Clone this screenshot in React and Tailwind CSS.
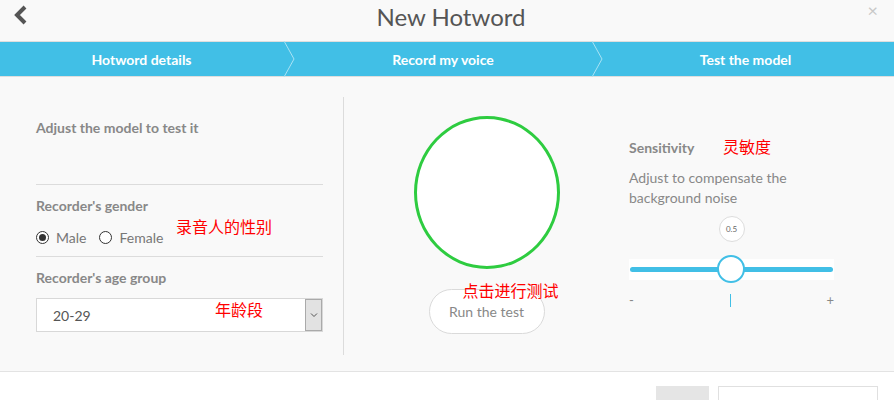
import { useState } from 'react';

const font = { fontFamily: 'Lato, "Noto Sans CJK SC", sans-serif' };

function StepArrow() {
  return (
    <svg width="12" height="36" viewBox="0 0 12 36" className="absolute right-[-6px] top-[-1px]">
      <polyline points="1,0 11,18 1,36" fill="none" stroke="#a9e2f4" strokeWidth="1" />
    </svg>
  );
}

function Step({ label, arrow, className }) {
  return (
    <div className={`relative flex items-center justify-center ${className}`}>
      <span className="text-[14px] font-bold text-white">{label}</span>
      {arrow && <StepArrow />}
    </div>
  );
}

function Radio({ checked, label }) {
  return (
    <label className="flex items-center gap-[7px] text-[14px] text-[#777]">
      <span className="flex h-[13px] w-[13px] items-center justify-center rounded-full border border-[#333] bg-white">
        {checked && <span className="h-[7px] w-[7px] rounded-full bg-[#333]" />}
      </span>
      {label}
    </label>
  );
}

export default function App() {
  const [gender, setGender] = useState('male');

  return (
    <div className="h-[400px] w-[894px] overflow-hidden bg-white" style={font}>
      <header className="relative flex h-[42px] items-center justify-center border-b border-[#dedede] bg-[#f9f9f9]">
        <svg width="16" height="20" viewBox="0 0 16 20" className="absolute left-[13px] top-[5px]">
          <polyline points="12,2 4,10 12,18" fill="none" stroke="#555" strokeWidth="4" />
        </svg>
        <h1 className="relative top-[-4px] ml-[8px] text-[24px] text-[#555]">New Hotword</h1>
        <span className="absolute right-[16px] top-[1px] text-[18px] leading-[18px] text-[#c8c8c8]">×</span>
      </header>

      <nav className="flex h-[35px] border-b border-[#dedede] bg-[#41bfe6]">
        <Step label="Hotword details" arrow className="w-[289px] pr-[6px]" />
        <Step label="Record my voice" arrow className="w-[308px]" />
        <Step label="Test the model" className="flex-1" />
      </nav>

      <main className="flex h-[295px] border-b border-[#e3e3e3] bg-[#f9f9f9] pt-[20px]">
        <section className="ml-[36px] w-[287px] pt-[20px]">
          <p className="text-[14px] font-bold text-[#888]">Adjust the model to test it</p>
          <div className="mt-[46px] border-t border-[#dcdcdc]" />
          <p className="mt-[10px] text-[14px] font-bold text-[#888]">Recorder's gender</p>
          <div className="relative mt-[11px] flex items-center gap-[13px]" onClick={() => setGender(gender === 'male' ? 'female' : 'male')}>
            <Radio checked={gender === 'male'} label="Male" />
            <Radio checked={gender === 'female'} label="Female" />
            <span className="absolute left-[140px] top-[-12px] text-[16px] text-[#ff0000]">录音人的性别</span>
          </div>
          <div className="mt-[8px] border-t border-[#dcdcdc]" />
          <p className="mt-[10px] text-[14px] font-bold text-[#888]">Recorder's age group</p>
          <div className="relative mt-[10px] flex h-[34px] items-center border border-[#d8d8d8] bg-white">
            <span className="ml-[16px] flex-1 text-[14px] text-[#555]">20-29</span>
            <span className="absolute left-[178px] top-[-1px] text-[16px] text-[#ff0000]">年龄段</span>
            <span className="flex h-[32px] w-[17px] items-center justify-center border border-[#aaa] bg-[#e2e2e2]">
              <svg width="8" height="6" viewBox="0 0 8 6">
                <polyline points="1,1.5 4,4.5 7,1.5" fill="none" stroke="#555" strokeWidth="1" />
              </svg>
            </span>
          </div>
        </section>

        <div className="ml-[20px] h-[258px] border-l border-[#dcdcdc]" />

        <section className="flex w-[285px] flex-col items-center pt-[19px]">
          <div className="ml-[1px] h-[153px] w-[146px] rounded-[50%] border-[3px] border-[#2ecc40] bg-white" />
          <div className="relative mt-[20px]">
            <button className="h-[45px] w-[116px] rounded-full border border-[#dadada] bg-white text-[14px] text-[#888]">
              Run the test
            </button>
            <span className="absolute left-[34px] top-[-10px] whitespace-nowrap text-[16px] text-[#ff0000]">点击进行测试</span>
          </div>
        </section>

        <section className="w-[205px] pt-[38px]">
          <div className="flex items-center">
            <p className="w-[94px] text-[14px] font-bold text-[#888]">Sensitivity</p>
            <span className="text-[16px] text-[#ff0000]">灵敏度</span>
          </div>
          <p className="mt-[9px] text-[14px] leading-[20px] text-[#888]">
            Adjust to compensate the
            <br />
            background noise
          </p>
          <div className="mt-[8px] flex justify-center">
            <span className="flex h-[26px] w-[26px] items-center justify-center rounded-full border border-[#ddd] bg-white text-[8px] text-[#666]">
              0.5
            </span>
          </div>
          <div className="relative mt-[17px] flex h-[21px] items-center bg-white px-[1px]">
            <div className="h-[5px] w-full rounded-full bg-[#41bfe6]" />
            <div className="absolute left-[88px] top-[-4px] h-[28px] w-[28px] rounded-full border-[2px] border-[#41bfe6] bg-white" />
          </div>
          <div className="mt-[11px] flex items-center justify-between text-[13px] text-[#888]">
            <span>-</span>
            <span className="h-[13px] border-l border-[#41bfe6]" />
            <span>+</span>
          </div>
        </section>
      </main>

      <footer className="flex justify-end gap-[9px] pr-[16px] pt-[14px]">
        <div className="h-[40px] w-[53px] bg-[#e5e5e5]" />
        <div className="h-[40px] w-[160px] border border-[#e0e0e0] bg-white" />
      </footer>
    </div>
  );
}
